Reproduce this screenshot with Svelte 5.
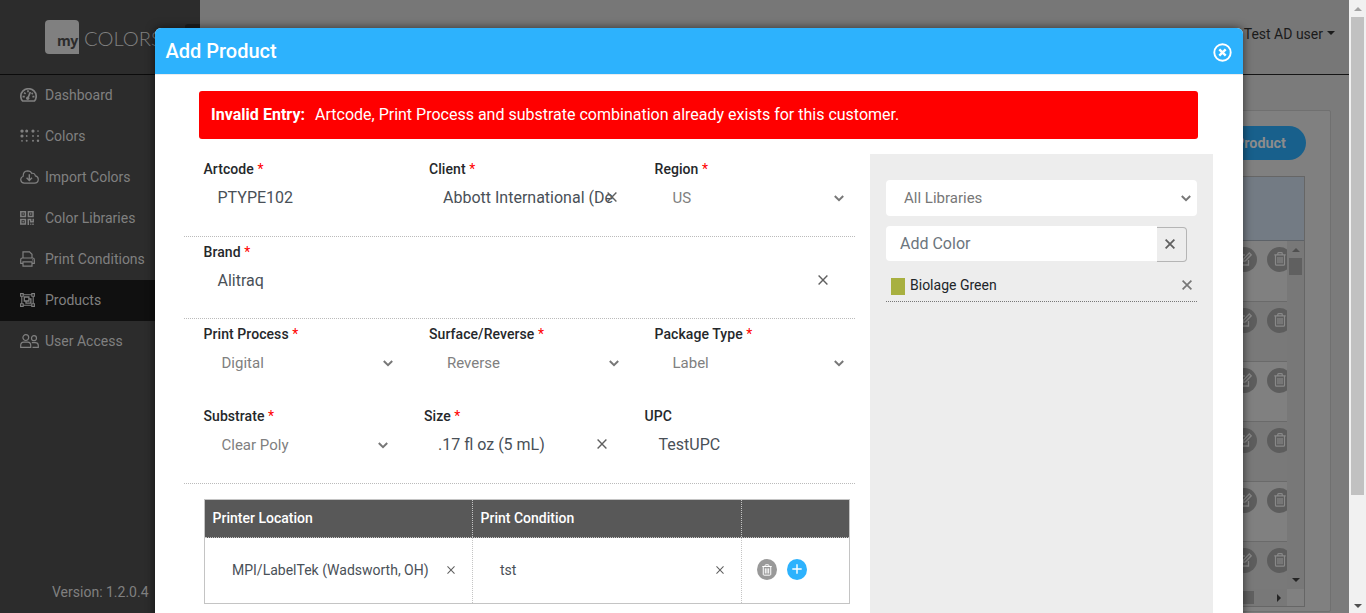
<script>
  const nav = [
    { label: 'Dashboard', icon: 'dash' },
    { label: 'Colors', icon: 'dots' },
    { label: 'Import Colors', icon: 'cloud' },
    { label: 'Color Libraries', icon: 'qr' },
    { label: 'Print Conditions', icon: 'print' },
    { label: 'Products', icon: 'group', active: true },
    { label: 'User Access', icon: 'users' }
  ];
  const sections = [
    { cls: 'first', fields: [
      { label: 'Artcode', req: true, value: 'PTYPE102', kind: 'text' },
      { label: 'Client', req: true, value: 'Abbott International (De', kind: 'clear' },
      { label: 'Region', req: true, value: 'US', kind: 'select' }
    ] },
    { cls: 'wide', fields: [
      { label: 'Brand', req: true, value: 'Alitraq', kind: 'clear' }
    ] },
    { cls: 'plain', fields: [
      { label: 'Print Process', req: true, value: 'Digital', kind: 'select' },
      { label: 'Surface/Reverse', req: true, value: 'Reverse', kind: 'select' },
      { label: 'Package Type', req: true, value: 'Label', kind: 'select' }
    ] },
    { cls: 'narrow', fields: [
      { label: 'Substrate', req: true, value: 'Clear Poly', kind: 'select' },
      { label: 'Size', req: true, value: '.17 fl oz (5 mL)', kind: 'clear' },
      { label: 'UPC', req: false, value: 'TestUPC', kind: 'text' }
    ] }
  ];
  const rows = [0, 1, 2, 3, 4, 5];
</script>

{#snippet cross(size, w)}
  <svg class="cross" width={size} height={size} viewBox="0 0 10 10" fill="none" stroke="currentColor" stroke-width={w}><path d="M.6.6 9.4 9.4M9.4.6.6 9.4" /></svg>
{/snippet}

{#snippet chevron()}
  <svg class="chev" width="10" height="7" viewBox="0 0 10 7" fill="none" stroke="currentColor" stroke-width="2"><path d="M.8 1 5 5.1 9.2 1" /></svg>
{/snippet}

{#snippet trash(w, h)}
  <svg width={w} height={h} viewBox="0 0 12 14" fill="none" stroke="currentColor" stroke-width="1.2"><path d="M.3 2.8h11.4M3.8 2.6V1.4q0-.7.7-.7h3q.7 0 .7.7v1.2M1.5 3v9.2q0 1 1 1h7q1 0 1-1V3M4 5v6.2M6 5v6.2M8 5v6.2" /></svg>
{/snippet}

<div class="screen">
  <div class="page">
    <aside>
      <div class="brand">
        <div class="logo-box">my</div>
        <span class="logo-text">COLORS</span>
        <span class="burger"></span>
      </div>
      <nav>
        {#each nav as n}
          <div class="item" class:active={n.active}>
            <span class="ico">
              {#if n.icon === 'dash'}
                <svg width="17" height="14" viewBox="0 0 17 14" fill="none" stroke="currentColor" stroke-width="1.7"><path d="M2.6 13h11.8q1.8-2 1.8-4.6a7.7 7.7 0 0 0-15.4 0Q.8 11 2.6 13z" /><path d="M7.8 10.5 10.3 4" stroke-width="1.7" /><circle cx="7.7" cy="10.3" r="1.7" fill="currentColor" stroke="none" /><path d="M2.6 8.6h2.2M4.1 4.6l1.5 1.3M8 2.2v2M12.8 5l-1.2 1M12.4 8.6h2" stroke-width="1.7" /></svg>
              {:else if n.icon === 'dots'}
                <svg width="20" height="14" viewBox="0 0 20 14" fill="currentColor"><circle cx="2" cy="2.1" r="1.7" /><circle cx="6.7" cy="2.1" r="1.5" /><circle cx="13" cy="2.1" r="1.6" /><circle cx="18" cy="2.1" r=".8" /><circle cx="2" cy="7" r="1.6" /><circle cx="6.7" cy="7" r=".9" /><circle cx="13" cy="7" r=".9" /><circle cx="18" cy="7" r="1" /><circle cx="2" cy="11.8" r=".9" /><circle cx="6.7" cy="11.8" r="1" /><circle cx="13" cy="11.8" r="1" /><circle cx="18" cy="11.8" r="1.2" /></svg>
              {:else if n.icon === 'cloud'}
                <svg width="19" height="14" viewBox="0 0 19 14" fill="none" stroke="currentColor" stroke-width="1.2"><path d="M4.2 13.2a3.6 3.6 0 0 1-1-7Q3 1 7.6.8q3.2 0 4.2 2.6 2.8-.8 3.6 2.5a3.7 3.7 0 0 1-.8 7.3z" /><path d="M9.3 4.2v6M6.6 7.8l2.7 2.7L12 7.8" stroke-width="1.4" /></svg>
              {:else if n.icon === 'qr'}
                <svg width="14" height="14" viewBox="0 0 14 14" fill="none" stroke="currentColor" stroke-width="1.5"><path d="M.8.8h4.6v4.6H.8zM8.4.8H13v4.6H8.4zM.8 8.4h4.6V13H.8z" /><path d="M2.5 3.1h1.3M10.1 3.1h1.3M2.5 10.7h1.3M8.3 14V8.4h2.4v2.3h2.5V7.8M10.3 13.3h1M12.3 13.3h1.4" /></svg>
              {:else if n.icon === 'print'}
                <svg width="15" height="16" viewBox="0 0 15 16" fill="none" stroke="currentColor" stroke-width="1.2"><path d="M3 7V.8h6.5L12 3.2V7" /><path d="M3 12.3H.7V8.8Q.7 7 2.4 7h10.2q1.7 0 1.7 1.8v3.5H12" /><path d="M3 10.8h9v4.4H3z" /><path d="M12.2 8.8h.8" /></svg>
              {:else if n.icon === 'group'}
                <svg width="15" height="14" viewBox="0 0 15 14" fill="none" stroke="currentColor" stroke-width="1.1"><path d="M3.2 1.8h8.6M3.2 12.2h8.6M1.8 3.2v7.6M13.2 3.2v7.6" /><path d="M.6.6h2.6v2.6H.6zM11.8.6h2.6v2.6h-2.6zM.6 10.8h2.6v2.6H.6zM11.8 10.8h2.6v2.6h-2.6z" /><path d="M4.3 4h4.6v4H4.3zM9 5.8h1.9v4.4H6V8.3" stroke-width="1.3" /></svg>
              {:else}
                <svg width="19" height="14" viewBox="0 0 19 14" fill="none" stroke="currentColor" stroke-width="1.2"><circle cx="5.8" cy="3.6" r="2.9" /><path d="M.7 13.3v-2q0-3.2 3-3.2h4q3 0 3 3.2v2z" /><circle cx="14" cy="4.2" r="2.5" /><path d="M11.8 8.6h3.4q3.1 0 3.1 2.8v1.9h-5.8" /></svg>
              {/if}
            </span>
            <span>{n.label}</span>
          </div>
        {/each}
      </nav>
      <div class="version">Version: 1.2.0.4</div>
    </aside>
    <main>
      <header>Test AD user <i></i></header>
      <div class="card">
        <div class="toolbar"><button class="add">Add Product</button></div>
        <div class="grid">
          <div class="grid-head"></div>
          <div class="grid-body">
            <div class="grid-rows">
              {#each rows as r}
                <div class="grid-row">
                  <span class="round"><svg width="14" height="14" viewBox="0 0 14 14" fill="none" stroke="currentColor" stroke-width="1.3"><path d="M7 3H1.5v10h9V8M5 9.4l.5-2.3L11.3 1l1.9 1.8L7.4 8.8z" /></svg></span>
                  <span class="round">{@render trash(12, 14)}</span>
                </div>
              {/each}
            </div>
            <div class="vbar"><i class="up"></i><b></b><i class="down"></i></div>
          </div>
          <div class="hbar"><b></b><i></i><span></span></div>
        </div>
      </div>
    </main>
    <div class="scroll"><i class="up"></i><b></b><i class="down"></i></div>
  </div>

  <div class="shade">
    <div class="modal">
      <div class="title">
        <h1>Add Product</h1>
        <svg width="19" height="19" viewBox="0 0 19 19" fill="none" stroke="#fff"><circle cx="9.5" cy="9.5" r="8.2" stroke-width="1.9" /><path d="M6.3 6.3l6.4 6.4M12.7 6.3l-6.4 6.4" stroke-width="2.4" /></svg>
      </div>
      <div class="alert"><strong>Invalid Entry:</strong><span>Artcode, Print Process and substrate combination already exists for this customer.</span></div>
      <div class="body">
        <div class="form">
          {#each sections as s}
            <div class="section {s.cls}">
              {#each s.fields as f}
                <div class="field">
                  <div class="label">{f.label}{#if f.req}<em>&nbsp;*</em>{/if}</div>
                  <div class="value {f.kind}">
                    <span>{f.value}</span>
                    {#if f.kind === 'select'}{@render chevron()}{/if}
                    {#if f.kind === 'clear'}{@render cross(10, 1.4)}{/if}
                  </div>
                </div>
              {/each}
            </div>
          {/each}
          <div class="table">
            <div class="tr th"><div>Printer Location</div><div>Print Condition</div><div></div></div>
            <div class="tr td">
              <div><span>MPI/LabelTek (Wadsworth, OH)</span>{@render cross(8, 1.3)}</div>
              <div><span>tst</span>{@render cross(8, 1.3)}</div>
              <div class="actions">
                <span class="del">{@render trash(10, 12)}</span>
                <span class="plus"><svg width="10" height="10" viewBox="0 0 10 10" stroke="#fff" stroke-width="1.4"><path d="M5 .3v9.4M.3 5h9.4" /></svg></span>
              </div>
            </div>
          </div>
        </div>
        <div class="panel">
          <div class="library"><span>All Libraries</span>{@render chevron()}</div>
          <div class="add-color">
            <div class="input">Add Color</div>
            <div class="clear-btn">{@render cross(10, 1.8)}</div>
          </div>
          <div class="color"><i></i><span>Biolage Green</span>{@render cross(10, 1.7)}</div>
        </div>
      </div>
    </div>
  </div>
</div>

<style>
  :global(body) { margin: 0; overflow: hidden; }
  .screen, .screen * { box-sizing: border-box; }
  .screen { position: relative; width: 1366px; height: 613px; overflow: hidden; font-family: Roboto, sans-serif; font-size: 14px; color: #212529; }
  svg { display: block; flex: none; }
  .page { display: flex; height: 613px; }

  aside { width: 200px; height: 613px; background: #2c2c2c; color: #808080; display: flex; flex-direction: column; flex: none; }
  .brand { height: 75px; border-bottom: 1px solid #0b0b0b; display: flex; padding-left: 45px; flex: none; }
  .logo-box { margin-top: 20px; width: 34px; height: 34px; border-radius: 4px 4px 0 4px; background: #808080; color: #2c2c2c; font: bold 14px/42px "Open Sans", sans-serif; text-align: right; padding-right: 1px; letter-spacing: -.3px; }
  .logo-text { margin: 25px 0 0 5px; font: 300 20.2px/26px Lato, sans-serif; width: 83px; overflow: hidden; }
  .burger { width: 15px; height: 30px; margin: 24px 0 0 18px; background: #1e1e1e; border-radius: 3px 0 0 3px; flex: none; }
  .item { height: 41px; display: flex; align-items: center; padding: 0 0 1px 20px; font-size: 14px; }
  .item.active { background: #101010; }
  .ico { width: 25px; flex: none; padding-bottom: 1px; }
  .version { margin-top: auto; padding: 0 0 11px 52px; line-height: 20px; font-size: 14px; }

  main { width: 1149px; background: #7b7b7b; display: flex; flex-direction: column; flex: none; }
  header { height: 75px; background: #777; border-bottom: 1px solid #151515; display: flex; justify-content: flex-end; align-items: center; padding: 0 14px 6px 0; font-size: 14px; color: #1b1b1b; flex: none; }
  header i { margin: 0 0 3px 4px; border: 4px solid transparent; border-top-color: #1b1b1b; border-bottom: 0; }
  .card { height: 502px; margin: 35px 18px 0 20px; border: 1px solid #707070; border-radius: 2px; background: #808080; padding: 15px 25px 0 20px; }
  .toolbar { height: 50px; display: flex; justify-content: flex-end; margin-right: -1px; }
  .add { width: 130px; height: 34px; padding: 0 20px 0 0; border: 0; border-radius: 17px; background: #18608c; color: #8c8c8c; font: bold 14.4px Roboto, sans-serif; text-align: right; }
  .grid { height: 431px; border: 1px solid #666; display: flex; flex-direction: column; }
  .grid-head { height: 64px; background: #737b84; border-bottom: 1px solid #5d6268; flex: none; }
  .grid-body { height: 348px; display: flex; }
  .grid-rows { flex: 1; overflow: hidden; }
  .grid-row { height: 60px; border-bottom: 1px solid #6a6a6a; display: flex; justify-content: flex-end; gap: 10px; padding-top: 6px; margin-right: -5px; background: #808080; }
  .grid-row:first-child { height: 61px; }
  .grid-row:nth-child(even) { background: #797979; }
  .round { width: 25px; height: 25px; border-radius: 50%; background: #5d5d5d; color: #898989; display: flex; align-items: center; justify-content: center; padding-bottom: 1px; flex: none; }
  .vbar { width: 17px; background: #787878; display: flex; flex-direction: column; align-items: center; flex: none; }
  .vbar i, .scroll i { border: 4px solid transparent; }
  .vbar .up { margin-top: 3px; border-bottom-color: #505050; }
  .vbar b { width: 13px; height: 17px; background: #606060; margin-top: 6px; }
  .vbar .down { margin-top: auto; margin-bottom: 3px; border-top-color: #252525; }
  .hbar { height: 17px; background: #787878; display: flex; align-items: center; justify-content: flex-end; flex: none; }
  .hbar b { width: 200px; height: 13px; background: #606060; }
  .hbar i { border: 4px solid transparent; border-left-color: #252525; margin: 0 2px 0 23px; }
  .hbar span { width: 17px; height: 17px; background: #808080; }
  .scroll { width: 17px; background: #f1f1f1; display: flex; flex-direction: column; align-items: center; flex: none; }
  .scroll .up { margin-top: 3px; border-bottom-color: #a3a3a3; }
  .scroll b { width: 13px; height: 478px; background: #c1c1c1; margin-top: 6px; }
  .scroll .down { margin-top: auto; margin-bottom: 1px; border-top-color: #505050; }

  .shade { position: absolute; inset: 0 17px 0 0; display: flex; padding: 28px 0 0 155px; overflow: hidden; }
  .modal { width: 1088px; height: 700px; flex: none; background: #fff; border-radius: 6px 6px 0 0; box-shadow: 0 0 10px rgba(0, 0, 0, .6); }
  .title { height: 47px; background: #2db2fd; border-bottom: 1px solid #e9ecef; border-radius: 6px 6px 0 0; display: flex; align-items: center; justify-content: space-between; padding: 0 11px 0 10.5px; color: #fff; }
  .title svg { margin-top: 3px; }
  h1 { margin: 0; font-size: 20px; line-height: 24px; font-weight: 500; }
  .alert { margin: 16px 45px 0 44px; height: 48px; border-radius: 3px; background: #f00; color: #fff; font-size: 16px; font-weight: 400; display: flex; align-items: center; gap: 10px; padding: 0 12px 2px; white-space: nowrap; }
  strong { font-weight: 700; letter-spacing: .03px; }
  .body { display: flex; gap: 15px; margin: 15px 30px 0 29px; height: 560px; }
  .form { width: 671px; flex: none; }
  .section { height: 83px; border-bottom: 1px dotted #bbb; display: flex; }
  .section.wide { height: 82px; }
  .section.plain { height: 82px; border: 0; }
  .field { width: 225.5px; flex: none; padding: 5px 0 0 19.5px; }
  .narrow .field { width: 220.5px; }
  .wide .field { width: 671px; }
  .label { line-height: 20px; font-weight: 500; font-size: 14px; letter-spacing: .07px; color: #25282b; }
  em { font-style: normal; font-weight: 400; color: #f00; }
  .value { height: 36px; display: flex; align-items: center; padding-left: 14px; font-size: 16px; color: #495057; white-space: nowrap; }
  .value.select { padding: 2px 16.5px 0 18px; font-size: 15px; color: #808080; justify-content: space-between; }
  .value.clear { padding-right: 18px; }
  .value.clear span { flex: 1; margin-right: -12px; min-width: 0; }
  .value.clear .cross { margin-left: 12px; }
  .wide .value.clear { padding-right: 27px; }
  .chev { color: #777; }
  .cross { color: #606060; }
  .table { margin: 15px 5px 0 20px; border: 1px solid #c4c4c4; height: 105px; }
  .tr { display: grid; grid-template-columns: 268px 269px 1fr; }
  .tr > div { display: flex; align-items: center; border-right: 1px dotted #c4c4c4; }
  .tr > div:last-child { border-right: 0; }
  .th { height: 38px; background: #585858; color: #fff; font-weight: 500; border-bottom: 1px dotted #c4c4c4; }
  .th > div { padding: 0 0 1px 7.6px; }
  .td { height: 65px; color: #495057; }
  .td > div { padding: 0 17px 1px 27px; justify-content: space-between; }
  .td > .actions { padding: 0 0 2px 15px; justify-content: flex-start; gap: 10px; }
  .actions span { width: 20px; height: 21px; border-radius: 50%; display: flex; align-items: center; justify-content: center; color: #fff; }
  .del { background: #999; }
  .actions .plus { background: #2db2fd; padding-bottom: 1px; }
  .panel { width: 343px; background: #ededed; padding: 26px 16px 0; }
  .library { height: 36px; border-radius: 4px; background: #fff; display: flex; align-items: center; justify-content: space-between; padding: 0 6px 0 18px; font-size: 15px; color: #777; }
  .add-color { display: flex; margin-top: 10px; height: 36px; }
  .input { width: 271px; height: 35px; background: #fff; border-radius: 4px 0 0 4px; padding-left: 14px; font-size: 16px; line-height: 35px; color: #6c757d; }
  .clear-btn { width: 30px; height: 35px; margin-top: 1px; border: 1px solid #b5b5b5; border-left: 0; border-radius: 0 4px 4px 0; display: flex; align-items: center; justify-content: center; padding: 0 3px 2px 0; }
  .color { height: 40px; border-bottom: 1px dotted #777; display: flex; align-items: center; padding: 7px 5px 0; }
  .color i { width: 14px; height: 17px; background: #a8b040; margin: 2px 5px 0 0; }
  .color span { flex: 1; font-size: 14px; }
  .color .cross { color: #777; }
</style>
